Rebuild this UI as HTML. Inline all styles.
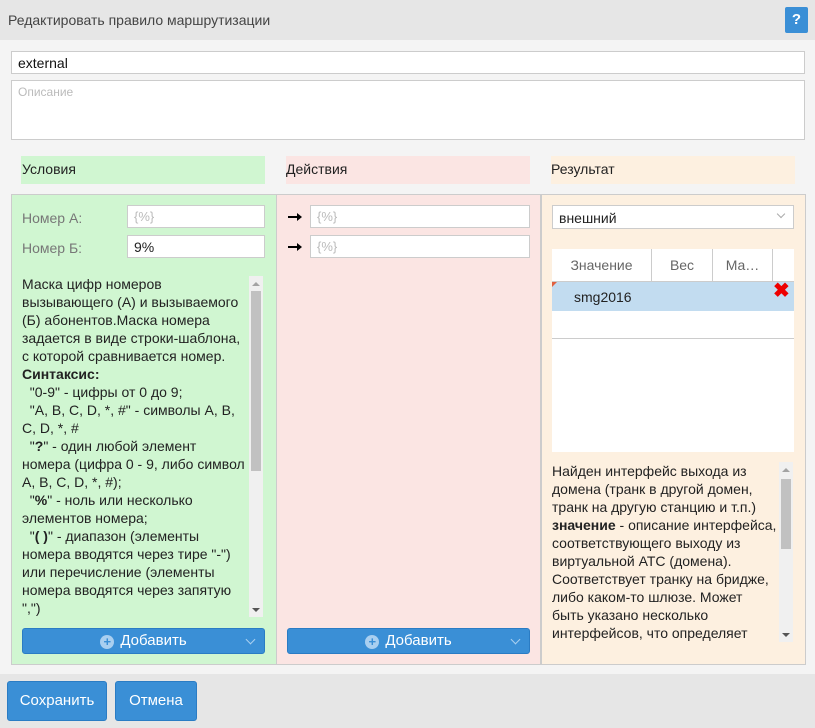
<!DOCTYPE html>
<html><head><meta charset="utf-8">
<style>
*{box-sizing:border-box;margin:0;padding:0}
body{width:815px;height:728px;background:#f4f4f4;font-family:"Liberation Sans","Noto Sans CJK SC",sans-serif;font-size:14px;color:#222;position:relative;overflow:hidden}
.a{position:absolute}
.inp{position:absolute;background:#fff;border:1px solid #ccc;height:23px;padding:3px 6px;font-size:13px;line-height:16px}
.ph{color:#bbb}
.btn{position:absolute;background:#3a8fd6;border:1px solid #2a7cc4;border-radius:3px;color:#fff;font-size:15px;text-align:center}
.help{font-size:14px;line-height:18px;color:#222;white-space:nowrap}
.sb{position:absolute;width:14px;background:#f0f0f0}
.sb .t{position:absolute;left:2px;width:10px;background:#c1c1c1}
.sb .u,.sb .d{position:absolute;left:3px;width:0;height:0;border-left:4px solid transparent;border-right:4px solid transparent}
.sb .u{top:6px;border-bottom:4px solid #a3a3a3}
.sb .d{bottom:5px;border-top:4px solid #555}
.plus{display:inline-block;width:14px;height:14px;border-radius:50%;background:#a9cff0;color:#3a8fd6;font-size:13px;line-height:14px;font-weight:bold;vertical-align:-1px;margin-right:6px;text-align:center}
.chev{position:absolute;right:10px;top:7px;width:7px;height:7px;border-right:1px solid #aad0f0;border-bottom:1px solid #aad0f0;transform:rotate(45deg)}
.arr{position:absolute;width:12px;height:2px;background:#000}
.arr:after{content:"";position:absolute;right:-2px;top:-3px;border-left:5px solid #000;border-top:4px solid transparent;border-bottom:4px solid transparent}
</style></head><body>
<div class="a" style="left:0;top:0;width:815px;height:40px;background:#e6e6e6"></div>
<div class="a" style="left:8px;top:12px;font-size:14px;color:#444">Редактировать правило маршрутизации</div>
<div class="a" style="left:785px;top:7px;width:23px;height:26px;background:#3a8fd6;border-radius:2px;color:#fff;font-weight:bold;text-align:center;line-height:26px;font-size:15px">?</div>

<div class="inp" style="left:11px;top:51px;width:794px;font-size:14px;color:#111">external</div>
<div class="inp" style="left:11px;top:80px;width:794px;height:60px;font-size:12px"><span class="ph">Описание</span></div>

<div class="a" style="left:21px;top:156px;width:244px;height:28px;background:#d0f6d1;padding:5px 1px;font-size:14px">Условия</div>
<div class="a" style="left:286px;top:156px;width:244px;height:28px;background:#fbe5e3;padding:5px 0;font-size:14px">Действия</div>
<div class="a" style="left:551px;top:156px;width:244px;height:28px;background:#fdf0e0;padding:5px 0;font-size:14px">Результат</div>

<div class="a" style="left:11px;top:194px;width:795px;height:471px;border:1px solid #ccc;background:#ccc"></div>
<div class="a" style="left:12px;top:195px;width:264px;height:469px;background:#d0f6d1"></div>
<div class="a" style="left:277px;top:195px;width:263px;height:469px;background:#fbe5e3"></div>
<div class="a" style="left:542px;top:195px;width:263px;height:469px;background:#fdf0e0"></div>

<div class="a" style="left:22px;top:210px;color:#777">Номер А:</div>
<div class="a" style="left:22px;top:240px;color:#777">Номер Б:</div>
<div class="inp" style="left:127px;top:205px;width:138px"><span class="ph">{%}</span></div>
<div class="inp" style="left:127px;top:235px;width:138px;font-size:14px">9%</div>

<div class="a help" style="left:22px;top:275px">Маска цифр номеров<br>вызывающего (А) и вызываемого<br>(Б) абонентов.Маска номера<br>задается в виде строки-шаблона,<br>с которой сравнивается номер.<br><b>Синтаксис:</b><br>&nbsp;&nbsp;"0-9" - цифры от 0 до 9;<br>&nbsp;&nbsp;"A, B, C, D, *, #" - символы A, B,<br>C, D, *, #<br>&nbsp;&nbsp;"<b>?</b>" - один любой элемент<br>номера (цифра 0 - 9, либо символ<br>A, B, C, D, *, #);<br>&nbsp;&nbsp;"<b>%</b>" - ноль или несколько<br>элементов номера;<br>&nbsp;&nbsp;"<b>( )</b>" - диапазон (элементы<br>номера вводятся через тире "-")<br>или перечисление (элементы<br>номера вводятся через запятую<br>",")</div>
<div class="sb" style="left:249px;top:276px;height:341px"><div class="u"></div><div class="t" style="top:15px;height:180px"></div><div class="d"></div></div>

<div class="btn" style="left:22px;top:628px;width:243px;height:26px;line-height:24px"><span class="plus">+</span>Добавить<div class="chev"></div></div>
<div class="btn" style="left:287px;top:628px;width:243px;height:26px;line-height:24px"><span class="plus">+</span>Добавить<div class="chev"></div></div>

<div class="arr" style="left:288px;top:216px"></div>
<div class="arr" style="left:288px;top:246px"></div>
<div class="inp" style="left:310px;top:205px;width:220px"><span class="ph">{%}</span></div>
<div class="inp" style="left:310px;top:235px;width:220px"><span class="ph">{%}</span></div>

<div class="inp" style="left:552px;top:205px;width:242px;height:24px;font-size:14px;padding-top:4px">внешний<div style="position:absolute;right:9px;top:5px;width:6px;height:6px;border-right:1px solid #aaa;border-bottom:1px solid #aaa;transform:rotate(45deg)"></div></div>
<div class="a" style="left:552px;top:249px;width:242px;height:203px;background:#fff"></div>
<div class="a" style="left:552px;top:249px;width:242px;height:33px;border-bottom:1px solid #ccc;color:#666">
  <div class="a" style="left:0;width:100px;height:32px;border-right:1px solid #ccc;text-align:center;line-height:32px">Значение</div>
  <div class="a" style="left:100px;width:61px;height:32px;border-right:1px solid #ccc;text-align:center;line-height:32px">Вес</div>
  <div class="a" style="left:161px;width:60px;height:32px;border-right:1px solid #ccc;text-align:center;line-height:32px">Ма…</div>
</div>
<div class="a" style="left:552px;top:282px;width:242px;height:29px;background:#c2dcf0"></div>
<div class="a" style="left:552px;top:282px;width:0;height:0;border-right:5px solid transparent;border-top:5px solid #e06040"></div>
<div class="a" style="left:574px;top:289px;font-size:14px">smg2016</div>
<div class="a" style="left:773px;top:280px;color:#e00;font-size:20px;font-weight:bold;line-height:22px">✖</div>
<div class="a" style="left:552px;top:338px;width:242px;height:1px;background:#ccc"></div>

<div class="a help" style="left:552px;top:462px">Найден интерфейс выхода из<br>домена (транк в другой домен,<br>транк на другую станцию и т.п.)<br><b>значение</b> - описание интерфейса,<br>соответствующего выходу из<br>виртуальной АТС (домена).<br>Соответствует транку на бридже,<br>либо каком-то шлюзе. Может<br>быть указано несколько<br>интерфейсов, что определяет</div>
<div class="sb" style="left:779px;top:462px;height:180px"><div class="u"></div><div class="t" style="top:17px;height:70px"></div><div class="d"></div></div>

<div class="a" style="left:0;top:674px;width:815px;height:54px;background:#e6e6e6"></div>
<div class="btn" style="left:7px;top:681px;width:100px;height:40px;line-height:38px">Сохранить</div>
<div class="btn" style="left:115px;top:681px;width:82px;height:40px;line-height:38px">Отмена</div>
</body></html>
